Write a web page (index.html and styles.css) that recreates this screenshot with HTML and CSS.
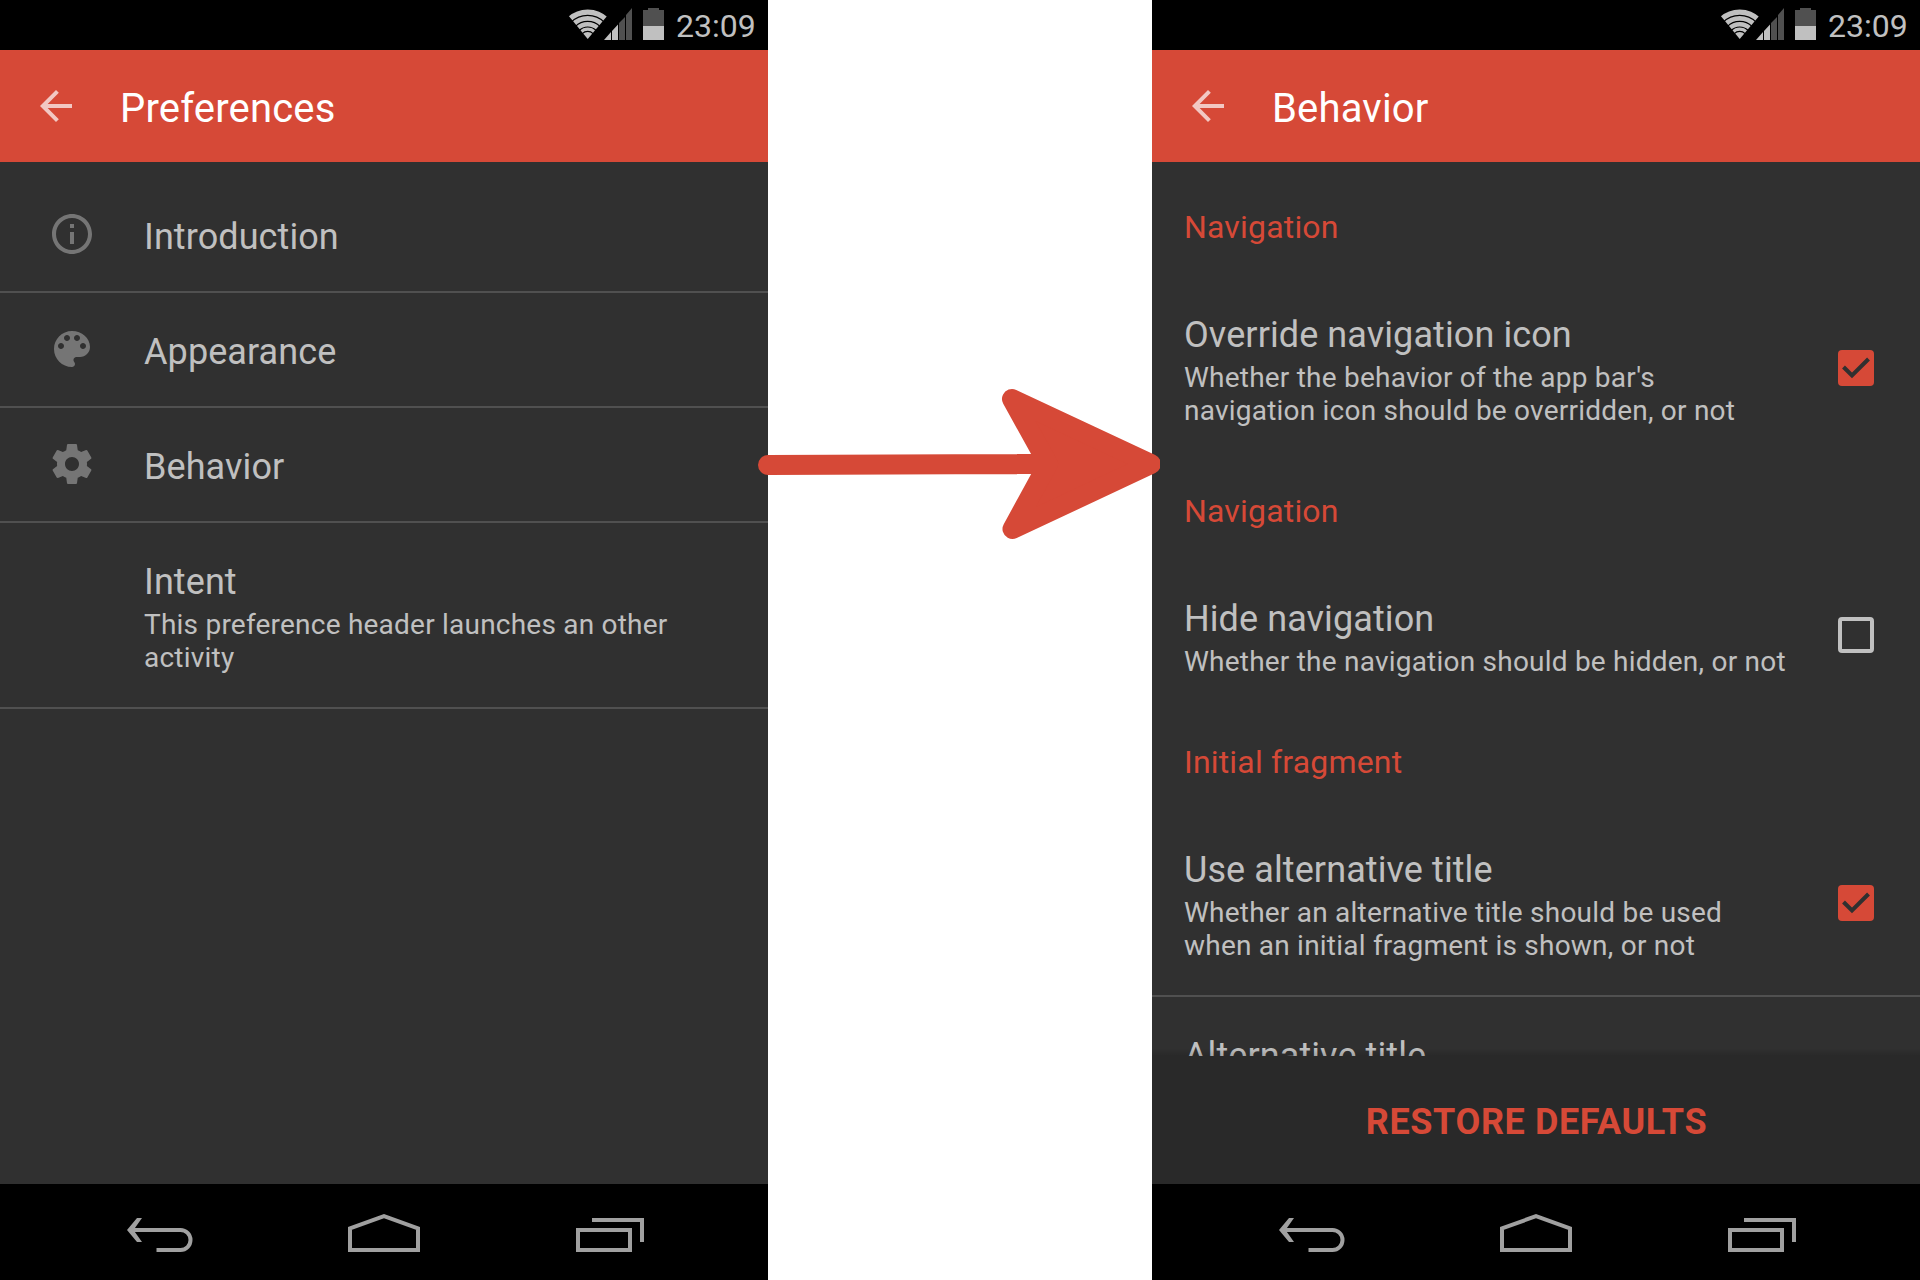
FILE: index.html
```html
<!DOCTYPE html>
<html lang="en">
<head>
<meta charset="utf-8">
<title>Preferences</title>
<link rel="stylesheet" href="styles.css">
</head>
<body>
<svg class="defs" width="0" height="0">
  <defs>
    <symbol id="status" viewBox="0 0 100 50">
      <clipPath id="wedge"><path d="M19.7 39 -5 9V0H45V9Z"/></clipPath>
      <g clip-path="url(#wedge)" fill="none" stroke="#c0c0c0">
        <circle cx="19.7" cy="39" r="26.900" stroke-width="5.400"/>
        <circle cx="19.7" cy="39" r="20.600" stroke-width="4.800"/>
        <circle cx="19.7" cy="39" r="14.800" stroke-width="4.400"/>
        <circle cx="19.7" cy="39" r="9.800" stroke-width="3.200"/>
        <circle cx="19.7" cy="39" r="3.500" stroke-width="7"/>
      </g>
      <path fill="#c0c0c0" d="M36 40 43 32V40ZM44 31 50 24.5V40H44Z"/>
      <path fill="#505050" d="M51 23 57 17V40H51ZM58 15 64 8V40H58Z"/>
      <path fill="#505050" d="M75 10H80V8H91V10H96V26H75Z"/>
      <path fill="#c0c0c0" d="M75 26H96V40H75Z"/>
    </symbol>
    <symbol id="up" viewBox="0 0 24 24"><path d="M20 11H7.83l5.59-5.59L12 4l-8 8 8 8 1.41-1.41L7.83 13H20v-2z"/></symbol>
    <symbol id="info" viewBox="0 0 24 24"><path d="M11 17h2v-6h-2v6zm1-15C6.48 2 2 6.48 2 12s4.480 10 10 10 10-4.480 10-10S17.520 2 12 2zm0 18c-4.410 0-8-3.590-8-8s3.590-8 8-8 8 3.590 8 8-3.590 8-8 8zM11 9h2V7h-2v2z"/></symbol>
    <symbol id="palette" viewBox="0 0 24 24"><path d="M12 3c-4.970 0-9 4.030-9 9s4.030 9 9 9c.83 0 1.500-.67 1.500-1.500 0-.39-.15-.74-.39-1.010-.23-.26-.38-.61-.38-.99 0-.83.67-1.500 1.500-1.500H16c2.760 0 5-2.240 5-5 0-4.420-4.030-8-9-8zm-5.500 9c-.83 0-1.500-.67-1.500-1.500S5.670 9 6.500 9 8 9.670 8 10.500 7.330 12 6.500 12zm3-4C8.670 8 8 7.330 8 6.500S8.670 5 9.500 5s1.500.67 1.500 1.500S10.330 8 9.500 8zm5 0c-.83 0-1.500-.67-1.500-1.500S13.670 5 14.500 5s1.500.67 1.500 1.500S15.330 8 14.500 8zm3 4c-.83 0-1.500-.67-1.500-1.500S16.670 9 17.500 9s1.500.67 1.500 1.500-.67 1.500-1.500 1.500z"/></symbol>
    <symbol id="gear" viewBox="0 0 24 24"><path d="M19.430 12.980c.04-.32.07-.64.07-.98s-.03-.66-.07-.98l2.110-1.650c.19-.15.24-.42.12-.64l-2-3.460c-.12-.22-.39-.3-.61-.22l-2.490 1c-.52-.4-1.080-.73-1.690-.98l-.38-2.650C14.460 2.180 14.250 2 14 2h-4c-.25 0-.46.18-.49.42l-.38 2.650c-.61.25-1.170.59-1.690.98l-2.490-1c-.23-.09-.49 0-.61.22l-2 3.460c-.13.22-.07.49.12.64l2.110 1.650c-.04.32-.07.65-.07.98s.03.66.07.98l-2.110 1.650c-.19.15-.24.42-.12.64l2 3.460c.12.22.39.3.61.22l2.490-1c.52.4 1.080.73 1.690.98l.38 2.650c.03.24.24.42.49.42h4c.25 0 .46-.18.49-.42l.38-2.650c.61-.25 1.170-.59 1.690-.98l2.490 1c.23.09.49 0 .61-.22l2-3.460c.12-.22.07-.49-.12-.64l-2.110-1.650zM12 15.500c-1.930 0-3.500-1.570-3.500-3.500s1.570-3.500 3.500-3.500 3.500 1.570 3.500 3.500-1.570 3.500-3.500 3.500z"/></symbol>
    <symbol id="checked" viewBox="0 0 36 36"><rect width="36" height="36" rx="4" fill="#d64937"/><path d="M5.500 17 14 25.500 30.500 9" fill="none" stroke="#303030" stroke-width="4"/></symbol>
    <symbol id="unchecked" viewBox="0 0 36 36"><rect x="2" y="2" width="32" height="32" rx="2" fill="none" stroke="#c0c0c0" stroke-width="4"/></symbol>
    <symbol id="nav-back" viewBox="0 0 80 48"><path d="M12.500 20H60.500A10 10 0 0 1 60.500 40H36.500" fill="none" stroke="#a0a0a0" stroke-width="4"/><path d="M17 8H22L13.500 20 22 32H17L7 20Z" fill="#a0a0a0"/></symbol>
    <symbol id="nav-home" viewBox="0 0 72 48"><path d="M2 18.300 36 6.200 70 18.300V40H2Z" fill="none" stroke="#a0a0a0" stroke-width="4"/></symbol>
    <symbol id="nav-recent" viewBox="0 0 72 48"><path d="M2 20H54V40H2ZM16 10H66V32" fill="none" stroke="#a0a0a0" stroke-width="4"/></symbol>
  </defs>
</svg>
<main class="stage">
  <section class="phone">
    <div class="status-bar"><svg class="status-icons"><use href="#status"/></svg><span class="clock">23:09</span></div>
    <header class="app-bar"><svg class="up"><use href="#up"/></svg><h1>Preferences</h1></header>
    <div class="content">
      <ul class="list headers">
        <li class="row divided"><svg class="icon"><use href="#info"/></svg><div class="text"><div class="title">Introduction</div></div></li>
        <li class="row divided"><svg class="icon"><use href="#palette"/></svg><div class="text"><div class="title">Appearance</div></div></li>
        <li class="row divided"><svg class="icon"><use href="#gear"/></svg><div class="text"><div class="title">Behavior</div></div></li>
        <li class="row divided"><span class="icon"></span><div class="text"><div class="title">Intent</div><div class="summary">This preference header launches an other<br>activity</div></div></li>
      </ul>
    </div>
    <nav class="nav-bar"><svg class="nav-back"><use href="#nav-back"/></svg><svg><use href="#nav-home"/></svg><svg><use href="#nav-recent"/></svg></nav>
  </section>
  <section class="phone">
    <div class="status-bar"><svg class="status-icons"><use href="#status"/></svg><span class="clock">23:09</span></div>
    <header class="app-bar"><svg class="up"><use href="#up"/></svg><h1>Behavior</h1></header>
    <div class="content">
      <div class="list preferences">
        <h2>Navigation</h2>
        <div class="row"><div class="text"><div class="title">Override navigation icon</div><div class="summary">Whether the behavior of the app bar's<br>navigation icon should be overridden, or not</div></div><svg class="check"><use href="#checked"/></svg></div>
        <h2>Navigation</h2>
        <div class="row"><div class="text"><div class="title">Hide navigation</div><div class="summary">Whether the navigation should be hidden, or not</div></div><svg class="check off"><use href="#unchecked"/></svg></div>
        <h2>Initial fragment</h2>
        <div class="row divided"><div class="text"><div class="title">Use alternative title</div><div class="summary">Whether an alternative title should be used<br>when an initial fragment is shown, or not</div></div><svg class="check"><use href="#checked"/></svg></div>
        <div class="row"><div class="text"><div class="title">Alternative title</div></div></div>
      </div>
      <div class="button-bar"><button>RESTORE DEFAULTS</button></div>
    </div>
    <nav class="nav-bar"><svg class="nav-back"><use href="#nav-back"/></svg><svg><use href="#nav-home"/></svg><svg><use href="#nav-recent"/></svg></nav>
  </section>
  <svg class="arrow" viewBox="0 0 410 160"><path d="M18 85 286 84M401 84 262 19 298 84 262.500 149Z"/></svg>
</main>
</body>
</html>
```
FILE: styles.css
```css
* { box-sizing: border-box; }
body { margin: 0; background: #fff; font-family: Roboto, "Noto Sans", sans-serif; color: #c0c0c0; }
.defs { position: absolute; }
.stage { position: relative; width: 1920px; height: 1280px; display: flex; justify-content: space-between; overflow: hidden; }
.phone { width: 768px; height: 1280px; display: flex; flex-direction: column; background: #303030; }

.status-bar { height: 50px; flex: none; display: flex; justify-content: flex-end; align-items: center; background: #000; padding-right: 12px; }
.status-icons { width: 100px; height: 50px; }
.clock { width: 80px; margin-left: 8px; padding-top: 2px; font-size: 32px; line-height: 48px; white-space: nowrap; }

.app-bar { height: 112px; flex: none; display: flex; align-items: center; background: #d64937; padding-left: 32px; }
.up { width: 48px; height: 48px; fill: #fff; opacity: .7; }
.app-bar h1 { margin: 6px 0 0 40px; font-size: 40px; font-weight: 400; line-height: 48px; letter-spacing: .18px; color: #fff; }

.content { flex: 1; min-height: 0; display: flex; flex-direction: column; }
.list { flex: 1; min-height: 0; margin: 0; padding: 16px 0 0; list-style: none; overflow: hidden; }
.row { display: flex; align-items: center; padding: 38px 32px 33px; }
.divided { border-bottom: 2px solid #505050; }
.text { flex: 1; min-width: 0; }
.title { font-size: 36px; line-height: 42px; letter-spacing: .09px; white-space: nowrap; }
.summary { margin-top: 5px; font-size: 28px; line-height: 33px; letter-spacing: .22px; white-space: nowrap; }
.icon { width: 48px; height: 48px; margin: -6px 48px 0 16px; fill: #757575; }
.check { width: 36px; height: 36px; margin: -5px 14px 0 0; }
.check.off { margin-top: -6px; }

.preferences { padding-top: 14px; }
.preferences h2 { height: 100px; margin: 0; padding: 32px 32px 0; font-size: 32px; font-weight: 400; line-height: 38px; letter-spacing: .18px; color: #d64937; }
.button-bar { position: relative; height: 128px; flex: none; display: flex; align-items: center; justify-content: center; background: #292929; }
.button-bar::before { content: ""; position: absolute; left: 0; right: 0; bottom: 100%; height: 8px; background: linear-gradient(transparent, rgba(0, 0, 0, .15)); }
.button-bar button { border: 0; padding: 4px 0 0 1px; background: none; color: #d64937; font: 700 36px/42px Roboto, sans-serif; letter-spacing: .6px; }

.nav-bar { height: 96px; flex: none; display: flex; justify-content: center; gap: 156px; padding-top: 26px; background: #000; }
.nav-bar svg { width: 72px; height: 48px; }
.nav-bar .nav-back { width: 80px; margin-right: -8px; }

.arrow { position: absolute; left: 750px; top: 380px; width: 410px; height: 160px; fill: #d64937; stroke: #d64937; stroke-width: 20; stroke-linecap: round; stroke-linejoin: round; }
```
